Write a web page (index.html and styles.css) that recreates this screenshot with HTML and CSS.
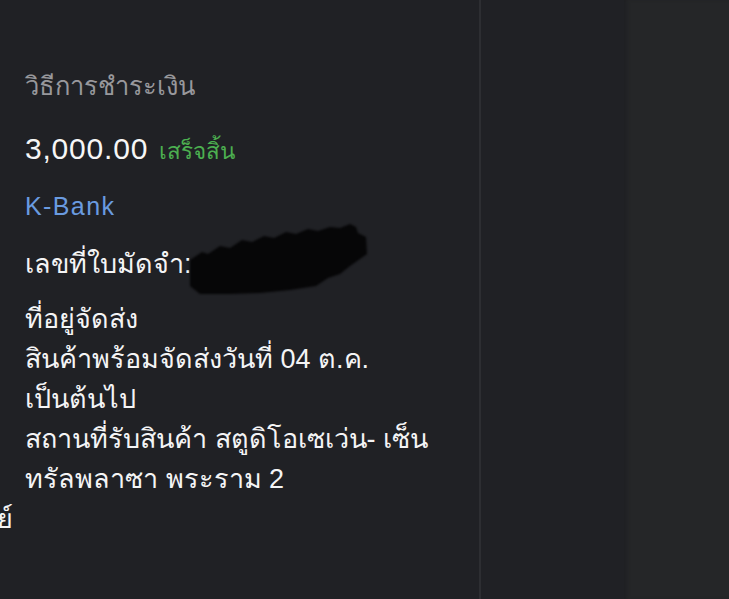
FILE: index.html
```html
<!DOCTYPE html>
<html lang="th">
<head>
<meta charset="utf-8">
<title>วิธีการชำระเงิน</title>
<link rel="stylesheet" href="styles.css">
</head>
<body>
<div class="layout">
  <main class="main">
    <div class="label">วิธีการชำระเงิน</div>
    <div class="amount-row"><span class="amount">3,000.00</span><span class="status">เสร็จสิ้น</span></div>
    <div class="bank">K-Bank</div>
    <div class="receipt">เลขที่ใบมัดจำ:
      <svg class="redact" width="180" height="72" viewBox="0 0 180 72"><polygon points="0,36 12,28 18,30 30,22 40,24 52,16 62,18 74,12 84,14 96,8 106,10 118,5 128,7 140,3 150,4 160,0 166,3 168,9 176,13 177,30 160,42 150,50 138,54 126,62 100,66 70,69 40,70 10,70 0,62" fill="#060607"/></svg>
    </div>
    <div class="address">
      <div>ที่อยู่จัดส่ง</div>
      <div>สินค้าพร้อมจัดส่งวันที่ 04 ต.ค.</div>
      <div>เป็นต้นไป</div>
      <div>สถานที่รับสินค้า สตูดิโอเซเว่น- เซ็น</div>
      <div>ทรัลพลาซา พระราม 2</div>
    </div>
    <div class="overflow"><span class="cut">ย์</span></div>
  </main>
  <div class="divider"></div>
  <div class="middle"></div>
  <aside class="side"></aside>
</div>
</body>
</html>
```

FILE: styles.css
```css
html, body {
  margin: 0;
  height: 100%;
  background: #202125;
  overflow: hidden;
}
body {
  font-family: "Liberation Sans", "Noto Sans", "DejaVu Sans", sans-serif;
  color: #f4f4f5;
}
.layout {
  display: flex;
  height: 599px;
}
.main {
  width: 479px;
  flex: none;
  padding-left: 25px;
  padding-top: 70px;
  box-sizing: border-box;
}
.divider {
  width: 2px;
  flex: none;
  background: #2d2e32;
}
.middle {
  width: 143px;
  flex: none;
  background: #202125;
}
.side {
  flex: 1;
  background: #252628;
  box-shadow: inset 4px 0 4px -2px #1e1f22;
}
.label {
  font-size: 25.5px;
  line-height: 32px;
  color: #98989c;
}
.amount-row {
  margin-top: 29px;
  display: flex;
  align-items: baseline;
  gap: 11px;
  line-height: 36px;
}
.amount {
  font-size: 30px;
  letter-spacing: 0.8px;
  color: #f6f6f6;
}
.status {
  font-size: 22.5px;
  color: #4caf50;
}
.bank {
  margin-top: 18px;
  font-size: 25px;
  letter-spacing: 1.4px;
  line-height: 36px;
  color: #6a9be0;
}
.receipt {
  margin-top: 22px;
  font-size: 27px;
  line-height: 36px;
  position: relative;
}
.redact {
  position: absolute;
  left: 165px;
  top: -22px;
  filter: blur(0.8px);
}
.address {
  margin-top: 17px;
  font-size: 27px;
  line-height: 40px;
}
.overflow {
  margin-left: -25px;
  font-size: 27px;
  line-height: 40px;
}
.cut {
  display: inline-block;
  margin-left: -3px;
}
```
